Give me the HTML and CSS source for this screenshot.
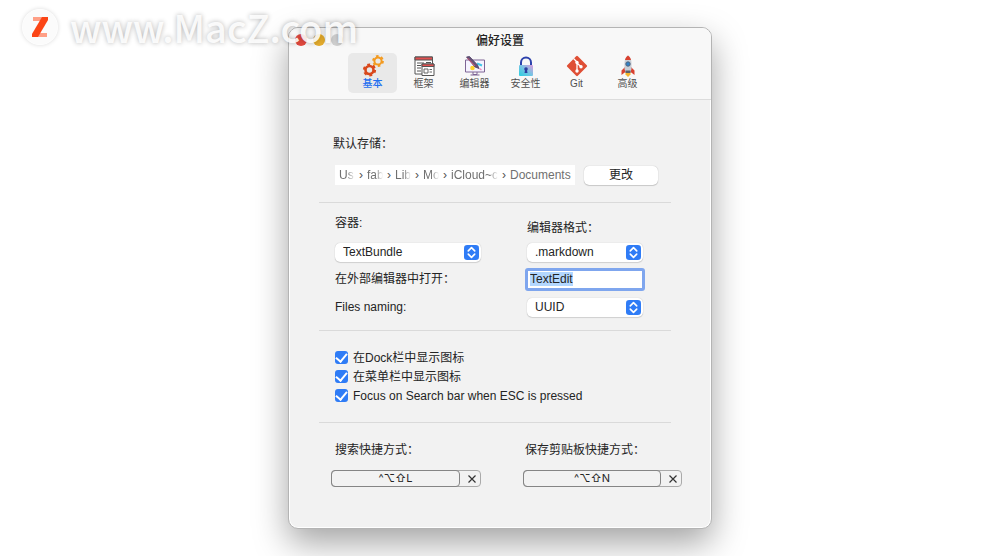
FILE: index.html
```html
<!DOCTYPE html>
<html lang="zh-CN">
<head>
    <meta charset="UTF-8">
    <title>偏好设置</title>
    <link rel="stylesheet" href="styles.css">
</head>
<body>
    <div class="watermark">
        <svg class="watermark-logo" viewBox="0 0 36 36" aria-hidden="true">
            <circle cx="18" cy="18" r="17.5" fill="#fbfbfb"/>
            <path d="M11 8h14v4H11z" fill="#ff9f86"/>
            <path d="M12 24h13v4H12z" fill="#ff9f86"/>
            <path d="M20 8h6v3L16 28h-6v-3z" fill="#fb4516"/>
        </svg>
        <span>www.MacZ.com</span>
    </div>

    <div class="window">
        <header class="toolbar">
            <div class="lights">
                <span class="light light-close"></span>
                <span class="light light-min"></span>
                <span class="light light-zoom"></span>
            </div>
            <h1 class="title">偏好设置</h1>
            <nav class="tabs">
                <button type="button" class="tab tab-active">
                    <svg viewBox="0 0 22 22">
                        <g fill="none" stroke="#d9481c" stroke-width="2.6">
                            <circle cx="7.5" cy="15" r="4"/>
                            <circle cx="7.5" cy="15" r="5.6" stroke-width="2" stroke-dasharray="2.9 2.96"/>
                        </g>
                        <g fill="none" stroke="#f39a1f" stroke-width="2">
                            <circle cx="16" cy="6" r="3.6"/>
                            <circle cx="16" cy="6" r="5" stroke-width="1.8" stroke-dasharray="2.6 2.63"/>
                        </g>
                    </svg>
                    <span>基本</span>
                </button>
                <button type="button" class="tab">
                    <svg viewBox="0 0 22 22">
                        <path d="M2 2h17.500v17H2z" fill="#fff" stroke="#555"/>
                        <path d="M2 2h17.500v3H2z" fill="#e35050" stroke="#555"/>
                        <path d="M4 8h7M4 10.500h4M4 13h4M4 16h4M13 7.500h5" stroke="#555" fill="none"/>
                        <path d="M9 9h12v11.500H9z" fill="#fff" stroke="#555"/>
                        <path d="M9 9h12v2.500H9z" fill="#e35050" stroke="#555"/>
                        <path d="M11 14h4v4h-4zM16.500 14.500H19M16.500 17H19" fill="none" stroke="#666"/>
                    </svg>
                    <span>框架</span>
                </button>
                <button type="button" class="tab">
                    <svg viewBox="0 0 22 22">
                        <path d="M1.500 5h19v12h-19z" fill="#f5f3ff" stroke="#7e6595"/>
                        <path d="M9 17v2.500h4V17M6.500 20h9" fill="none" stroke="#7e6595"/>
                        <circle cx="8.500" cy="13" r="2.300" fill="#ffd12e"/>
                        <path d="M13 8.500l5 2" stroke="#43c6e8" stroke-width="2"/>
                        <path d="M15.500 13.500l2 1.500" stroke="#f28abb" stroke-width="1.500"/>
                        <path d="M2.500 2l3-.500 8 8.500 1.500 3.500-4-1.500z" fill="#655477" stroke="#4c3b65" stroke-width=".8"/>
                        <path d="M3.500 3l7.500 8" stroke="#d65577"/>
                    </svg>
                    <span>编辑器</span>
                </button>
                <button type="button" class="tab">
                    <svg viewBox="0 0 22 22">
                        <defs>
                            <linearGradient id="lockBody" x1="0" y1="1" x2="1" y2="0">
                                <stop offset="0" stop-color="#28cfdf"/>
                                <stop offset=".5" stop-color="#75c4e4"/>
                                <stop offset="1" stop-color="#dc9bdc"/>
                            </linearGradient>
                        </defs>
                        <path d="M6 11V7.500a5 5 0 0 1 10 0V11" fill="none" stroke="#2d42ac" stroke-width="2"/>
                        <rect x="4" y="10" width="14" height="11" rx="1" fill="url(#lockBody)"/>
                        <circle cx="11" cy="14" r="1.800" fill="#2b3c9e"/>
                        <path d="M10.200 14h1.600l.700 4h-3z" fill="#2b3c9e"/>
                    </svg>
                    <span>安全性</span>
                </button>
                <button type="button" class="tab">
                    <svg viewBox="0 0 22 22">
                        <rect x="3.500" y="3.500" width="15" height="15" rx="1.200" transform="rotate(45 11 11)" fill="#df4f35"/>
                        <path d="M7.500 3.500L11 7v9M11 8l4 3.800" fill="none" stroke="#fff" stroke-width="1.300"/>
                        <circle cx="11" cy="7.500" r="1.700" fill="#fff"/>
                        <circle cx="11" cy="16" r="1.700" fill="#fff"/>
                        <circle cx="15" cy="11.800" r="1.700" fill="#fff"/>
                    </svg>
                    <span>Git</span>
                </button>
                <button type="button" class="tab">
                    <svg viewBox="0 0 22 22">
                        <path d="M8 12l-3.500 3.500V20L9 16.500zM14 12l3.500 3.500V20L13 16.500z" fill="#d9412f"/>
                        <path d="M8.500 17h5v2.500L11 22l-2.500-2.500z" fill="#f7b52b"/>
                        <path d="M11 .500C8.500 2.500 7.500 5 7.500 8v6l1 3h5l1-3V8c0-3-1-5.500-3.500-7.500z" fill="#c9ced6"/>
                        <path d="M11 .500C9.300 1.800 8.400 3.200 8 5h6c-.400-1.800-1.300-3.200-3-4.500z" fill="#d9412f"/>
                        <path d="M8.500 15.500h5V18h-5z" fill="#5b616e"/>
                        <circle cx="11" cy="9" r="2.200" fill="#3182c7" stroke="#53657c"/>
                    </svg>
                    <span>高级</span>
                </button>
            </nav>
        </header>

        <main class="content">
            <!-- Storage -->
            <section class="section storage">
                <p class="label">默认存储：</p>
                <div class="storage-row">
                    <div class="path">
                        <span class="crumb crumb-cut">Us</span><i>›</i>
                        <span class="crumb crumb-cut">fab</span><i>›</i>
                        <span class="crumb crumb-cut">Lib</span><i>›</i>
                        <span class="crumb crumb-cut">Mo</span><i>›</i>
                        <span class="crumb crumb-cut crumb-wide">iCloud~c</span><i>›</i>
                        <span class="crumb">Documents</span>
                    </div>
                    <button type="button" class="change-btn">更改</button>
                </div>
            </section>

            <!-- Files -->
            <section class="section files">
                <label class="label label-top" for="container">容器:</label>
                <label class="label label-bottom" for="format">编辑器格式：</label>
                <div class="select select-wide">
                    <select id="container"><option>TextBundle</option></select>
                    <svg viewBox="0 0 14 14"><rect width="14" height="14" rx="3"/><path d="M4 5.500l3-3 3 3M4 8.500l3 3 3-3"/></svg>
                </div>
                <div class="select">
                    <select id="format"><option>.markdown</option></select>
                    <svg viewBox="0 0 14 14"><rect width="14" height="14" rx="3"/><path d="M4 5.500l3-3 3 3M4 8.500l3 3 3-3"/></svg>
                </div>
                <label class="label" for="editor">在外部编辑器中打开：</label>
                <input type="text" id="editor" class="text-input" value="TextEdit">
                <label class="label" for="naming">Files naming:</label>
                <div class="select">
                    <select id="naming"><option>UUID</option></select>
                    <svg viewBox="0 0 14 14"><rect width="14" height="14" rx="3"/><path d="M4 5.500l3-3 3 3M4 8.500l3 3 3-3"/></svg>
                </div>
            </section>

            <!-- Display -->
            <section class="section checks">
                <label class="check"><input type="checkbox" checked><span>在Dock栏中显示图标</span></label>
                <label class="check"><input type="checkbox" checked><span>在菜单栏中显示图标</span></label>
                <label class="check"><input type="checkbox" checked><span>Focus on Search bar when ESC is pressed</span></label>
            </section>

            <!-- Shortcuts -->
            <section class="shortcuts">
                <div class="shortcut">
                    <p class="label">搜索快捷方式：</p>
                    <div class="recorder">
                        <button type="button" class="keys">^⌥⇧L</button>
                        <button type="button" class="clear" aria-label="清除">
                            <svg viewBox="0 0 8 8"><path d="M.500 .500l7 7M7.500 .500l-7 7"/></svg>
                        </button>
                    </div>
                </div>
                <div class="shortcut shortcut-wide">
                    <p class="label">保存剪贴板快捷方式：</p>
                    <div class="recorder">
                        <button type="button" class="keys">^⌥⇧N</button>
                        <button type="button" class="clear" aria-label="清除">
                            <svg viewBox="0 0 8 8"><path d="M.500 .500l7 7M7.500 .500l-7 7"/></svg>
                        </button>
                    </div>
                </div>
            </section>
        </main>
    </div>

    <script>
        // Start with the editor name selected
        document.getElementById('editor').select();
    </script>
</body>
</html>
```
FILE: styles.css
```css
* {
    box-sizing: border-box;
}

body {
    margin: 0;
    padding: 27px 0;
    min-height: 100vh;
    overflow: hidden;
    background: #fff;
    color: #242424;
    font-family: "Liberation Sans", "Noto Sans CJK SC", sans-serif;
    font-size: 12px;
    line-height: 20px;
}

button, input, select {
    font: inherit;
    color: inherit;
    margin: 0;
}

/* Watermark */
.watermark {
    position: absolute;
    z-index: 2;
    left: 22px;
    top: 9px;
    display: flex;
    align-items: center;
    gap: 12px;
    color: rgba(255, 255, 255, 0.9);
    font-family: "Noto Sans CJK SC", sans-serif;
    font-size: 38px;
    font-weight: 500;
    line-height: 36px;
    text-shadow: 0 0 5px rgba(0, 0, 0, 0.3);
    pointer-events: none;
}

.watermark-logo {
    width: 36px;
    height: 36px;
    border-radius: 50%;
    box-shadow: 0 0 4px rgba(0, 0, 0, 0.15);
}

/* Window */
.window {
    max-width: 424px;
    margin: 0 auto;
    border: 1px solid #b4b4b4;
    border-radius: 10px;
    background: #f2f2f2;
    box-shadow: 0 14px 34px rgba(0, 0, 0, 0.36), inset 0 0 0 1px #fff;
}

.toolbar {
    position: relative;
    padding: 3px 0 6px;
    border-bottom: 1px solid #dcdcdc;
    border-radius: 9px 9px 0 0;
    background: #f8f8f8;
}

.lights {
    position: absolute;
    left: 6px;
    top: 6px;
    display: flex;
    gap: 6px;
}

.light {
    width: 12px;
    height: 12px;
    border-radius: 50%;
}

.light-close {
    background: #e2493f;
}

.light-min {
    background: #e3ab2d;
}

.light-zoom {
    background: #d0d0d0;
}

.title {
    margin: 0 0 2px;
    font-size: 12px;
    font-weight: 500;
    text-align: center;
}

.tabs {
    display: flex;
    justify-content: center;
    gap: 2px;
}

.tab {
    width: 49px;
    height: 40px;
    padding: 2px 0 0;
    border: none;
    border-radius: 5px;
    background: none;
    color: #505050;
    font-size: 10px;
    line-height: 13px;
    display: flex;
    flex-direction: column;
    align-items: center;
}

.tab svg {
    width: 22px;
    height: 22px;
}

.tab-active {
    background: #e9e9e9;
    color: #1f6ff0;
    font-weight: 500;
}

/* Sections */
.content {
    padding: 0 40px 41px 30px;
}

.section {
    padding: 0 13px 0 16px;
    border-bottom: 1px solid #dadada;
}

.label {
    margin: 0;
}

.storage {
    padding-top: 34px;
    padding-bottom: 17px;
}

.storage .label {
    margin-left: -2px;
}

.storage-row {
    display: flex;
    align-items: center;
    gap: 9px;
    margin-top: 11px;
}

.path {
    flex: 1;
    display: flex;
    padding: 0 4px;
    background: #fff;
    color: #707070;
    white-space: nowrap;
}

.path i {
    width: 12px;
    color: #505050;
    font-style: normal;
    text-align: center;
}

.crumb-cut {
    width: 16px;
    overflow: hidden;
    -webkit-mask-image: linear-gradient(90deg, #000 50%, transparent);
    mask-image: linear-gradient(90deg, #000 50%, transparent);
}

.crumb-wide {
    width: 47px;
    -webkit-mask-image: linear-gradient(90deg, #000 80%, transparent);
    mask-image: linear-gradient(90deg, #000 80%, transparent);
}

.change-btn {
    flex-shrink: 0;
    width: 74px;
    height: 19px;
    padding: 0;
    border: none;
    border-radius: 5px;
    background: #fff;
    box-shadow: 0 0 1px rgba(0, 0, 0, 0.3), 0 1px 1px rgba(0, 0, 0, 0.15);
    line-height: 19px;
}

.files {
    display: grid;
    grid-template-columns: 192px 1fr;
    grid-template-rows: 28px 19px 24px 22px;
    row-gap: 5px;
    align-items: center;
    padding-top: 7px;
    padding-bottom: 12px;
}

.label-top {
    align-self: start;
    margin-top: 3px;
}

.label-bottom {
    align-self: end;
}

.select {
    position: relative;
    width: 116px;
    height: 19px;
}

.select-wide {
    width: 146px;
}

.select select {
    appearance: none;
    display: block;
    width: 100%;
    height: 19px;
    padding: 0 20px 0 8px;
    border: none;
    border-radius: 5px;
    background: #fff;
    box-shadow: 0 0 1px rgba(0, 0, 0, 0.25), 0 1px 1px rgba(0, 0, 0, 0.12);
    line-height: 19px;
}

.select svg {
    position: absolute;
    right: 2px;
    top: 2px;
    width: 15px;
    height: 15px;
    fill: #2f7cf6;
    pointer-events: none;
}

.select path {
    fill: none;
    stroke: #fff;
    stroke-width: 1.5;
    stroke-linecap: round;
    stroke-linejoin: round;
}

.text-input {
    width: 120px;
    height: 23px;
    margin-left: -2px;
    padding: 0 2px;
    border: 3px solid #7fa6ee;
    border-radius: 3px;
    outline: none;
    background: #fff;
}

.text-input::selection {
    background: #b3d7ff;
    color: #242424;
}

.checks {
    display: flex;
    flex-direction: column;
    padding-top: 17px;
    padding-bottom: 17px;
}

.check {
    display: flex;
    align-items: center;
    gap: 5px;
    height: 19px;
}

.check input {
    appearance: none;
    width: 13px;
    height: 13px;
    border-radius: 3px;
    background: #2f7cf6;
    display: grid;
    place-items: center;
}

.check input:checked::before {
    content: "";
    width: 5px;
    height: 9px;
    margin-bottom: 2px;
    border: solid #fff;
    border-width: 0 2px 2px 0;
    transform: rotate(40deg);
}

/* Shortcuts */
.shortcuts {
    display: flex;
    gap: 42px;
    margin-right: -11px;
    padding: 17px 0 0 12px;
}

.shortcut {
    width: 150px;
}

.shortcut-wide {
    width: 159px;
}

.shortcut .label {
    margin: 0 0 10px 4px;
}

.shortcut-wide .label {
    margin-left: 2px;
}

.recorder {
    display: flex;
    height: 17px;
    border: 1px solid #aaa;
    border-radius: 4px;
}

.keys {
    flex: 1;
    margin: -1px 0 -1px -1px;
    padding: 0;
    border: 1px solid #858585;
    border-radius: 4px;
    background: none;
    font-family: Inter, "Noto Sans CJK SC", sans-serif;
    font-size: 11px;
    line-height: 15px;
}

.clear {
    width: 20px;
    padding: 0 0 0 4px;
    border: none;
    background: none;
    display: grid;
    place-items: center;
}

.clear svg {
    width: 8px;
    height: 8px;
    stroke: #333;
    stroke-width: 1.2;
}
```
